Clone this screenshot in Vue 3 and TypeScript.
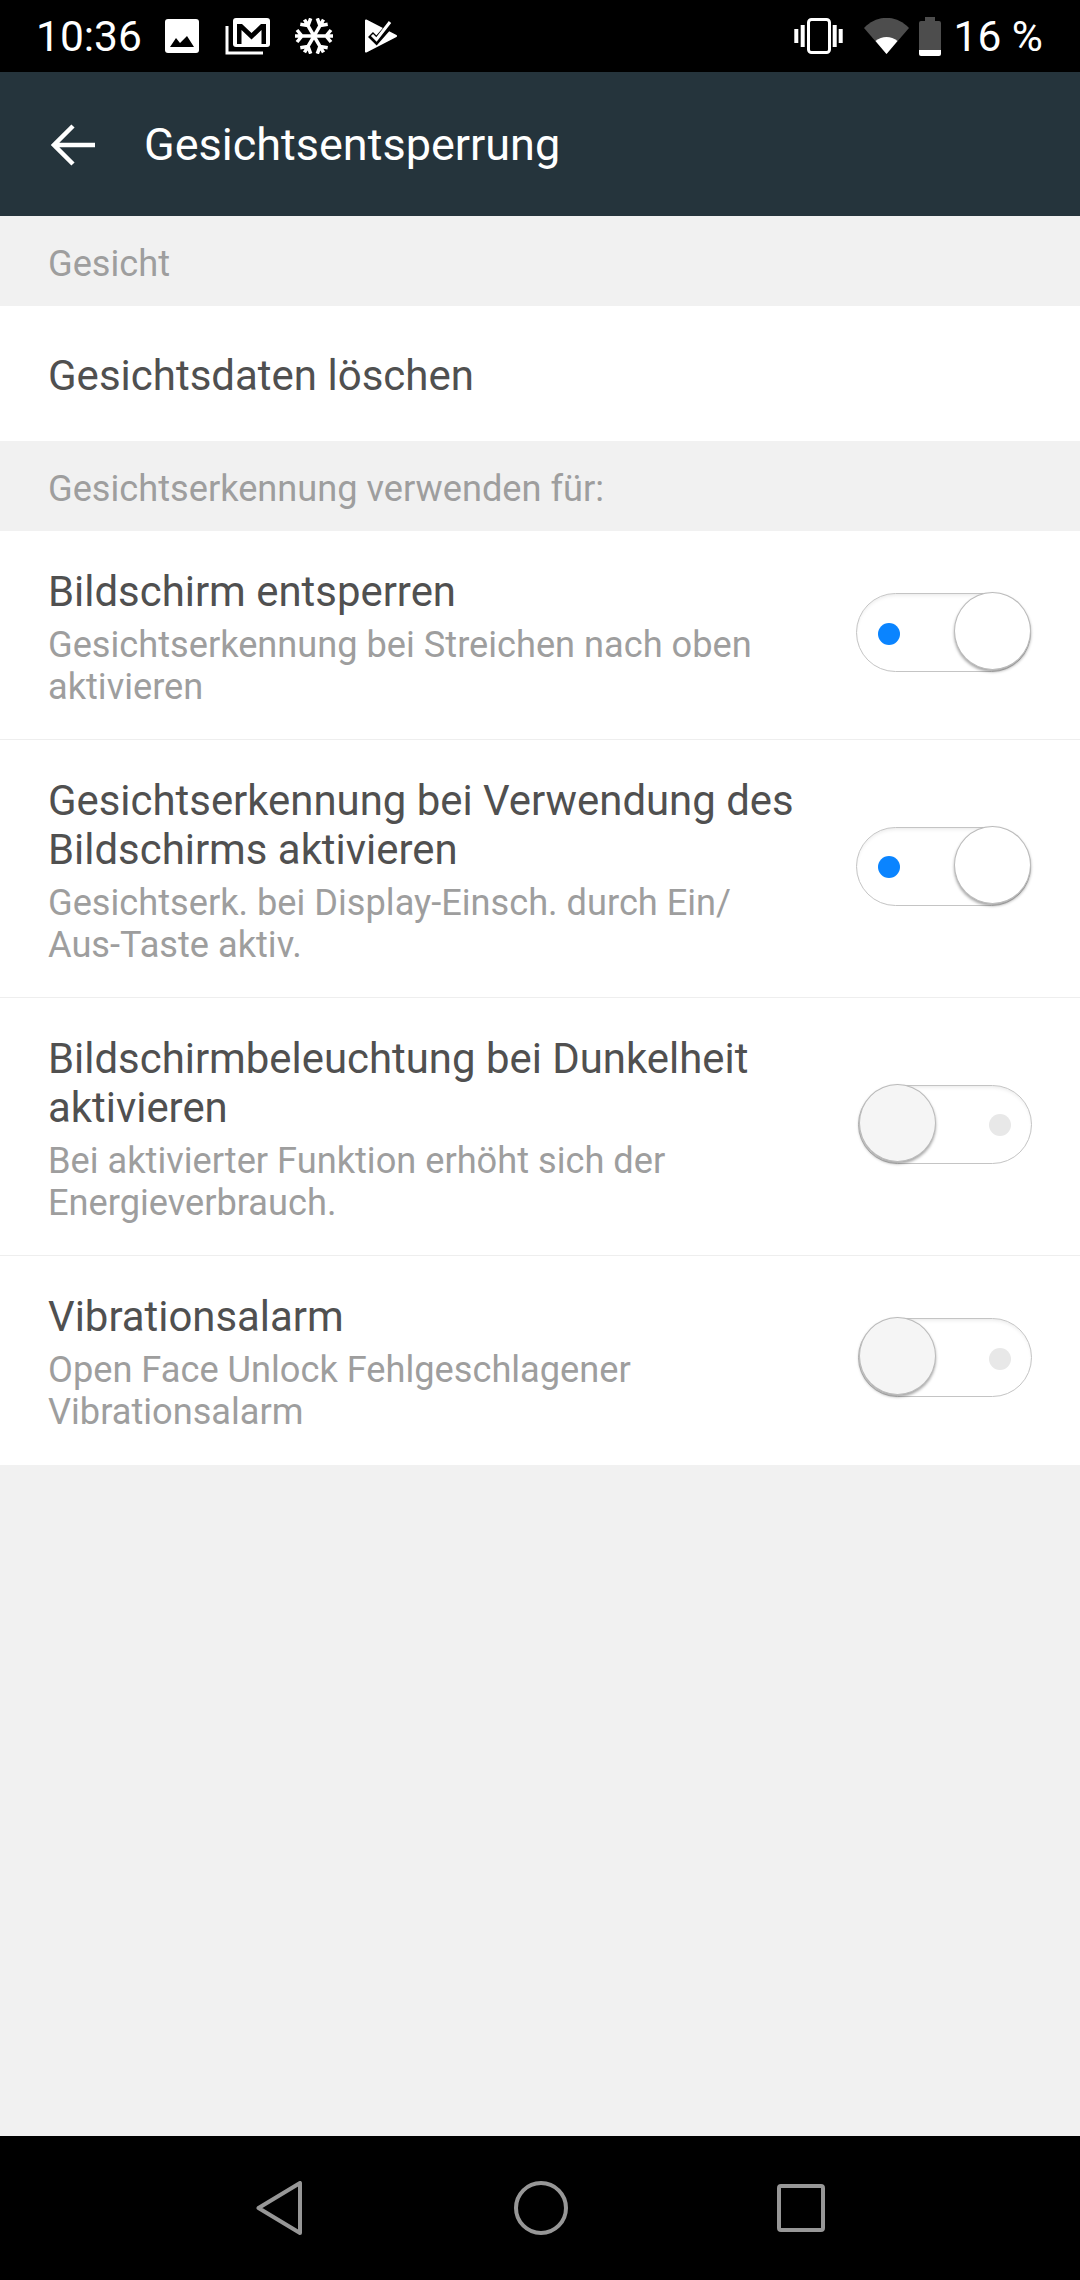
<script setup lang="ts">
interface Row { title: string; sub: string; on: boolean }
const rows: Row[] = [
  { title: 'Bildschirm entsperren', sub: 'Gesichtserkennung bei Streichen nach oben aktivieren', on: true },
  { title: 'Gesichtserkennung bei Verwendung des Bildschirms aktivieren', sub: 'Gesichtserk. bei Display-Einsch. durch Ein/ Aus-Taste aktiv.', on: true },
  { title: 'Bildschirmbeleuchtung bei Dunkelheit aktivieren', sub: 'Bei aktivierter Funktion erhöht sich der Energieverbrauch.', on: false },
  { title: 'Vibrationsalarm', sub: 'Open Face Unlock Fehlgeschlagener Vibrationsalarm', on: false },
]
const arms = [0, 60, 120, 180, 240, 300]
</script>

<template>
  <div class="screen">
    <div class="status">
      <div class="status-left">
        <span class="clock">10:36</span>
        <svg class="ic-photo" width="34" height="34" viewBox="0 0 34 34"><rect width="34" height="34" rx="3" fill="#fff"/><path d="M5 28l6-9 4 5 7-7 7 11z" fill="#000"/></svg>
        <svg class="ic-mail" width="45" height="37" viewBox="0 0 45 37"><path d="M2 8v27h36" fill="none" stroke="#fff" stroke-width="3"/><rect x="8" width="37" height="29" rx="3" fill="#fff"/><path d="M12 26V6h5l9.500 9L36 6h5v20h-4.500V12l-10 9.500L16.500 12v14z" fill="#000"/></svg>
        <svg class="ic-snow" width="40" height="36" viewBox="0 0 40 36"><g fill="none" stroke="#fff" stroke-width="3.500"><path v-for="a in arms" :key="a" d="M20 18H39M32 18l5-6M32 18l5 6" :transform="`rotate(${a} 20 18)`"/></g></svg>
        <svg class="ic-tasks" width="32" height="34" viewBox="0 0 32 34"><path d="M1 1.500L31 17 1 32.500z" fill="#fff" stroke="#fff" stroke-width="2" stroke-linejoin="round"/><path d="M5.500 15.500l6 6L22 9.500" fill="none" stroke="#000" stroke-width="7"/><path d="M7 16l4.500 4.500L25 3" fill="none" stroke="#fff" stroke-width="3"/></svg>
      </div>
      <div class="status-right">
        <svg class="ic-vib" width="49" height="36" viewBox="0 0 49 36"><rect x="14.500" y="1.500" width="21" height="33" rx="3" fill="none" stroke="#fff" stroke-width="3"/><path d="M2.300 11v14M8.700 7v22M40.700 7v22M46.700 11v14" stroke="#fff" stroke-width="4" fill="none"/></svg>
        <svg class="ic-wifi" width="45" height="36" viewBox="0 0 45 36"><path d="M0 10C13-3.500 32-3.500 45 10L22.500 36z" fill="#4d4d4d"/><path d="M11.500 23c6.500-5.500 15.500-5.500 22 0L22.500 36z" fill="#fff"/></svg>
        <svg class="ic-batt" width="22" height="39" viewBox="0 0 22 39"><path d="M6 0h10v4h4a2 2 0 0 1 2 2v27H0V6a2 2 0 0 1 2-2h4z" fill="#4d4d4d"/><path d="M0 33h22v4a2 2 0 0 1-2 2H2a2 2 0 0 1-2-2z" fill="#fff"/></svg>
        <span class="pct">16 %</span>
      </div>
    </div>

    <header class="appbar">
      <svg class="back" width="44" height="44" viewBox="0 0 44 44"><path d="M3 22h41M22 3L3 22l19 19" fill="none" stroke="#fff" stroke-width="4.500"/></svg>
      <span class="title">Gesichtsentsperrung</span>
    </header>

    <main class="content">
      <div class="section">Gesicht</div>
      <div class="plain">Gesichtsdaten löschen</div>
      <div class="section">Gesichtserkennung verwenden für:</div>
      <div class="list">
        <div v-for="r in rows" :key="r.title" class="row">
          <div class="texts">
            <div class="row-title">{{ r.title }}</div>
            <div class="row-sub">{{ r.sub }}</div>
          </div>
          <div class="toggle" :class="r.on ? 'on' : 'off'">
            <span class="dot"></span>
            <span class="knob"></span>
          </div>
        </div>
      </div>
    </main>

    <nav class="navbar">
      <svg class="nav-back" width="46" height="54" viewBox="0 0 46 54"><path d="M2.500 27L44 2v50z" fill="none" stroke="#979797" stroke-width="4" stroke-linejoin="round"/></svg>
      <svg class="nav-home" width="54" height="54" viewBox="0 0 54 54"><circle cx="27" cy="27" r="25" fill="none" stroke="#979797" stroke-width="4"/></svg>
      <svg class="nav-recent" width="48" height="48" viewBox="0 0 48 48"><rect x="2" y="2" width="44" height="44" rx="2" fill="none" stroke="#979797" stroke-width="4"/></svg>
    </nav>
  </div>
</template>

<style>
html, body { margin: 0; padding: 0; }
</style>

<style scoped>
.screen {
  width: 1080px;
  height: 2280px;
  display: flex;
  flex-direction: column;
  background: #f1f1f1;
  font-family: Roboto, "Liberation Sans", sans-serif;
  overflow: hidden;
}
.status {
  height: 72px;
  flex: none;
  background: #000;
  color: #fff;
  display: flex;
  justify-content: space-between;
  align-items: center;
  padding: 0 37px 0 36px;
  font-size: 42.500px;
}
.status-left, .status-right { display: flex; align-items: center; }
.clock { margin-right: 23px; }
.ic-mail { margin-left: 26px; }
.ic-snow { margin-left: 24px; }
.ic-tasks { margin-left: 31px; }
.ic-vib { margin-right: 21px; }
.ic-batt { margin-left: 10px; }
.pct { margin-left: 13px; }
.appbar {
  height: 144px;
  flex: none;
  background: #25343c;
  display: flex;
  align-items: center;
  padding-left: 51px;
  color: #fff;
}
.back { margin-top: 2px; }
.title { margin-left: 49px; font-size: 45px; }
.content { flex: 1; }
.section {
  height: 90px;
  box-sizing: border-box;
  padding: 4px 0 0 48px;
  display: flex;
  align-items: center;
  font-size: 36.200px;
  color: #9e9e9e;
}
.plain {
  height: 135px;
  box-sizing: border-box;
  padding: 4px 0 0 48px;
  background: #fff;
  display: flex;
  align-items: center;
  font-size: 42px;
  color: #505050;
}
.list { background: #fff; }
.row {
  display: flex;
  align-items: center;
  justify-content: space-between;
  padding: 36px 48px 31px 48px;
  border-bottom: 1px solid #eeeeee;
}
.row:last-child { border-bottom: none; padding-bottom: 32px; }
.texts { width: 750px; }
.row-title { font-size: 41.900px; line-height: 49px; color: #505050; }
.row-sub { font-size: 36.200px; line-height: 42px; color: #9e9e9e; margin-top: 8px; }
.toggle {
  position: relative;
  width: 175px;
  height: 79px;
  margin-bottom: 10px;
  box-sizing: border-box;
  border: 1.500px solid #c4c4c4;
  border-radius: 40px;
  background: #fff;
  box-shadow: inset 0 3px 4px -2px rgba(0,0,0,.1);
  flex: none;
}
.toggle.on { margin-right: 1px; }
.toggle.off { width: 174px; }
.dot { position: absolute; top: 50%; width: 22px; height: 22px; margin-top: -10px; border-radius: 50%; }
.on .dot { left: 21px; background: #0a84ff; }
.off .dot { right: 20px; background: #e8e8e8; }
.knob {
  position: absolute;
  top: -2px;
  width: 77px;
  height: 78px;
  box-sizing: border-box;
  border-radius: 50%;
  border: 1.500px solid #bbb;
  box-shadow: 0 2px 3px rgba(0,0,0,.35);
}
.on .knob { right: -1px; background: #fff; }
.off .knob { left: 0; background: #f5f5f5; }
.navbar {
  height: 144px;
  flex: none;
  background: #000;
  display: flex;
  align-items: center;
  justify-content: center;
}
.nav-back { margin-right: 212px; }
.nav-home { margin-right: 209px; }
</style>
